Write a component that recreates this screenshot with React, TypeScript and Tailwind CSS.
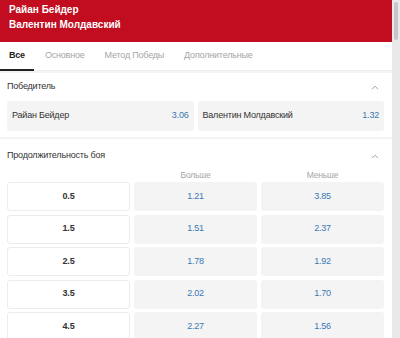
import React from "react";

const tabs = ["Все", "Основное", "Метод Победы", "Дополнительные"];

const totals = [
  { line: "0.5", over: "1.21", under: "3.85" },
  { line: "1.5", over: "1.51", under: "2.37" },
  { line: "2.5", over: "1.78", under: "1.92" },
  { line: "3.5", over: "2.02", under: "1.70" },
  { line: "4.5", over: "2.27", under: "1.56" },
];

const ChevronUp = () => (
  <svg width="8" height="5" viewBox="0 0 8 5" fill="none" className="mr-[5px]">
    <path d="M1 4.2L4 1.2L7 4.2" stroke="#a0a0a0" strokeWidth="1" />
  </svg>
);

const SectionHeader = ({ title }: { title: string }) => (
  <div className="flex items-center justify-between h-[28px] px-[7px] pr-[8px]">
    <span className="text-[9px] tracking-[-0.2px] text-[#333]">{title}</span>
    <ChevronUp />
  </div>
);

export default function App() {
  return (
    <div className="flex w-[400px] h-[338px] overflow-hidden bg-white font-['Liberation_Sans',Arial,sans-serif]">
      <div className="w-[392px] shrink-0 flex flex-col">
        <header className="shrink-0 h-[42px] bg-[#c10d1f] pl-[9px] pt-[2px] text-white font-bold text-[10px] leading-[15px]">
          <div>Райан Бейдер</div>
          <div>Валентин Молдавский</div>
        </header>

        <nav className="shrink-0 flex h-[29px] border-b border-[#ededed] text-[9px] tracking-[-0.2px]">
          {tabs.map((t, i) => (
            <div
              key={t}
              className={
                i === 0
                  ? "flex items-center pl-[9px] pr-[9px] mr-[1px] border-b-2 border-[#222] font-bold text-[#222] -mb-px"
                  : "flex items-center px-[10px] text-[#a6a6a6]"
              }
            >
              {t}
            </div>
          ))}
        </nav>

        <div className="shrink-0 h-[2px] bg-[#f3f3f3]" />

        <section className="shrink-0 pb-[6px]">
          <SectionHeader title="Победитель" />
          <div className="grid grid-cols-2 gap-[4px] pl-[7px] pr-[8px] text-[9px] tracking-[-0.2px]">
            <div className="flex items-center justify-between h-[30px] rounded-[3px] bg-[#f4f4f4] px-[5px]">
              <span className="text-[#333]">Райан Бейдер</span>
              <span className="text-[#3a79b5]">3.06</span>
            </div>
            <div className="flex items-center justify-between h-[30px] rounded-[3px] bg-[#f4f4f4] px-[5px]">
              <span className="text-[#333]">Валентин Молдавский</span>
              <span className="text-[#3a79b5]">1.32</span>
            </div>
          </div>
        </section>

        <div className="shrink-0 h-[2px] bg-[#f3f3f3]" />

        <section className="shrink-0">
          <div className="pt-[3px]">
            <SectionHeader title="Продолжительность боя" />
          </div>
          <div className="grid grid-cols-3 gap-[4px] pl-[7px] pr-[8px] h-[12px] leading-[10px] text-[8.5px] tracking-[-0.2px] text-[#a6a6a6]">
            <span />
            <span className="text-center">Больше</span>
            <span className="text-center">Меньше</span>
          </div>
          <div className="flex flex-col gap-[3.5px] pl-[7px] pr-[8px]">
            {totals.map((r) => (
              <div key={r.line} className="grid grid-cols-3 gap-[4px] text-[9px] tracking-[-0.2px]">
                <div className="flex items-center justify-center h-[29px] rounded-[3px] border border-[#ececec] bg-white font-bold text-[#333]">
                  {r.line}
                </div>
                <div className="flex items-center justify-center h-[29px] rounded-[3px] bg-[#f4f4f4] text-[#3a79b5]">
                  {r.over}
                </div>
                <div className="flex items-center justify-center h-[29px] rounded-[3px] bg-[#f4f4f4] text-[#3a79b5]">
                  {r.under}
                </div>
              </div>
            ))}
          </div>
        </section>
      </div>

      <div className="w-[8px] shrink-0 bg-[#e9e9e9] flex justify-center pt-[2px]">
        <div className="w-[4px] h-[38px] rounded-full bg-[#c6c6c6]" />
      </div>
    </div>
  );
}
